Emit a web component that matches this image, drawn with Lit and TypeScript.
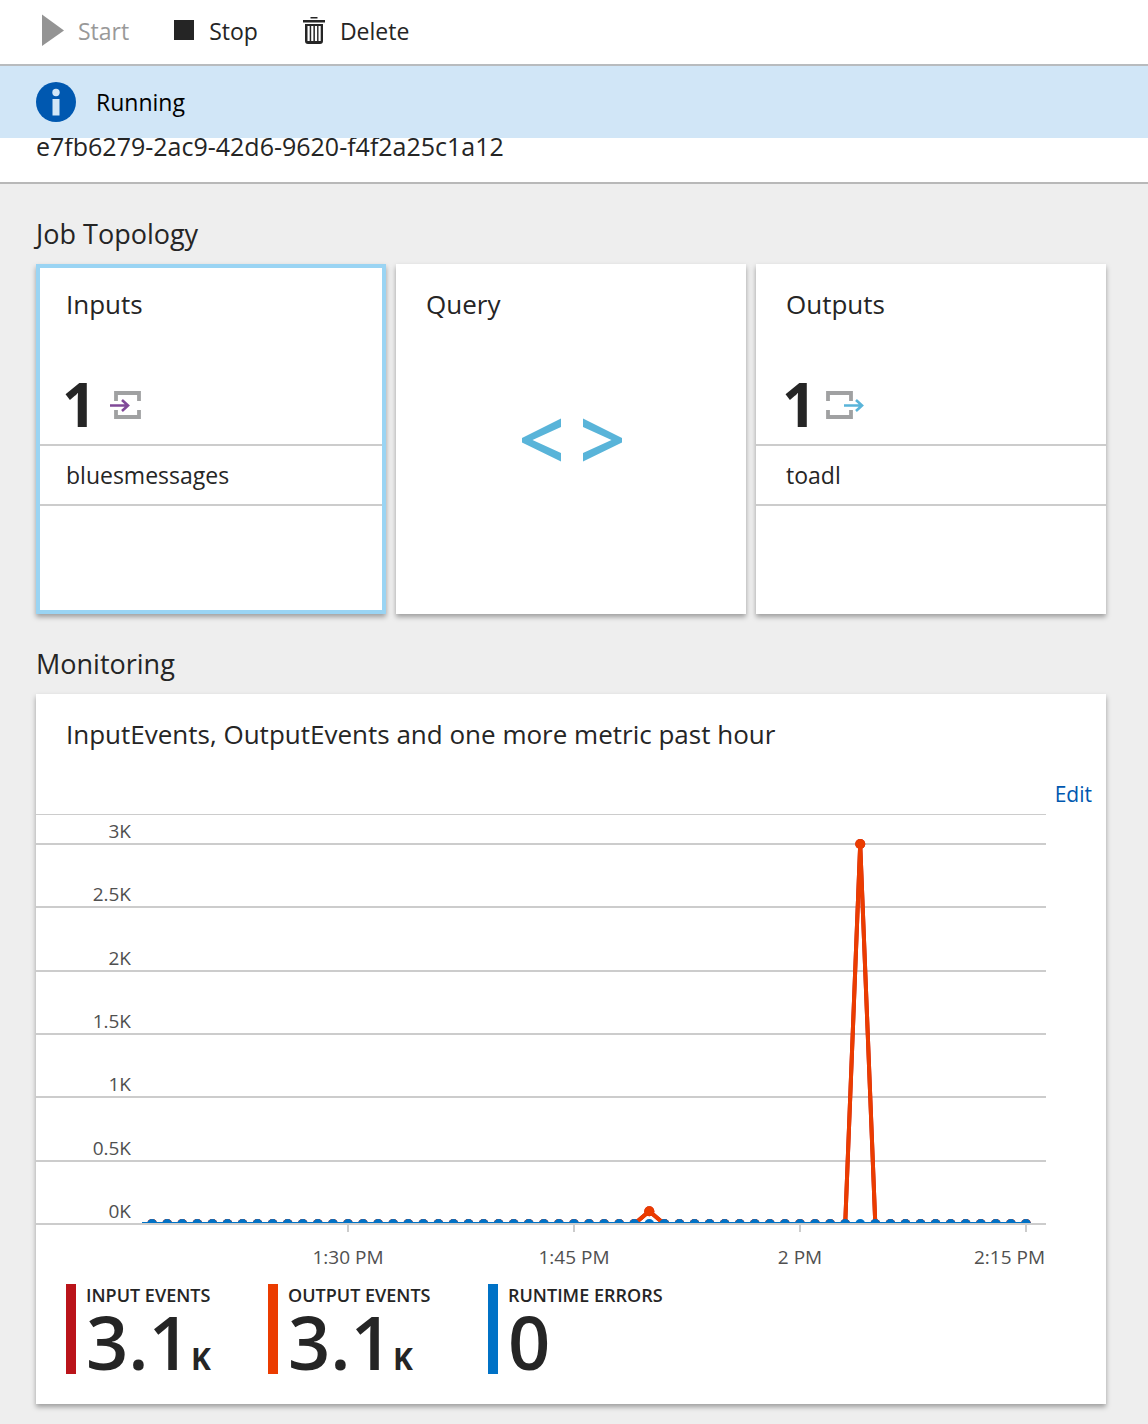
import { LitElement, html, svg, css } from "lit";
import { customElement, property } from "lit/decorators.js";

type TileKind = "inputs" | "query" | "outputs";

/** One step of the job: its inputs, its query or its outputs. */
@customElement("topology-tile")
class TopologyTile extends LitElement {
  @property() kind: TileKind = "query";
  @property() heading = "";
  @property() count = "";
  @property() item = "";
  @property({ type: Boolean, reflect: true }) selected = false;

  static styles = css`
    :host {
      display: flex;
      flex-direction: column;
      min-height: 350px;
      background: #fff;
      box-shadow: 0 3px 5px rgba(0, 0, 0, 0.34);
    }
    :host([selected]) {
      outline: 4px solid #9ad4f3;
      outline-offset: -4px;
    }
    .heading {
      margin: 0;
      padding: 20px 30px 0;
      font-size: 26px;
      line-height: 40px;
      font-weight: 400;
    }
    .summary {
      display: flex;
      align-items: center;
      height: 80px;
      margin-top: 40px;
      padding: 0 26px;
      border-bottom: 2px solid #ccc;
    }
    .count {
      font-size: 60px;
      line-height: 80px;
      font-weight: 700;
    }
    .item {
      padding: 0 30px;
      border-bottom: 2px solid #ccc;
      font-size: 23px;
      line-height: 58px;
    }
    .glyph {
      display: block;
      margin-left: 9px;
    }
    .code {
      display: flex;
      justify-content: center;
      padding-top: 94px;
    }
  `;

  private glyph() {
    const arrow =
      this.kind === "inputs"
        ? svg`<path d="M5 18.5H23M17 13l6 5.5-6 5.5" fill="none" stroke="#804998" stroke-width="2.6"/>`
        : svg`<path d="M19 18.5H37M31 13l6 5.5-6 5.5" fill="none" stroke="#59b4d9" stroke-width="2.6"/>`;
    const x = this.kind === "inputs" ? 9 : 1;
    return html`<svg class="glyph" width="42" height="34" viewBox="0 0 42 34" aria-hidden="true">
      <path
        transform="translate(${x} 4)"
        d="M2 10V2H25V10M2 19V26H25V19"
        fill="none"
        stroke="#a0a1a2"
        stroke-width="3.8"
      />
      ${arrow}
    </svg>`;
  }

  render() {
    return html`
      <h3 class="heading">${this.heading}</h3>
      ${this.kind === "query"
        ? html`<div class="code">
            <svg width="102" height="44" viewBox="0 0 102 44" aria-hidden="true">
              <path
                d="M2 20L41 0.500V9L12.500 22 41 35V43.500L2 24.500ZM102 20L63 0.500V9L91.500 22 63 35V43.500L102 24.500Z"
                fill="#59b4d9"
              />
            </svg>
          </div>`
        : html`<div class="summary"><span class="count">${this.count}</span>${this.glyph()}</div>
            <div class="item">${this.item}</div>`}
    `;
  }
}

/** Minute-by-minute line chart of the job's events. */
@customElement("metric-chart")
class MetricChart extends LitElement {
  static styles = css`
    :host {
      display: block;
    }
    .plot {
      display: block;
      width: 100%;
      height: auto;
    }
    .axis {
      font-size: 19px;
      fill: #505050;
    }
  `;

  private readonly levels = ["3K", "2.5K", "2K", "1.5K", "1K", "0.5K", "0K"];
  private readonly peaks: Record<number, number> = { 33: 100, 47: 3000 };

  private px(minute: number) {
    return 116.1 + (minute * 226) / 15;
  }

  private py(value: number) {
    return 410 - (value * 380) / 3000;
  }

  private series(color: string, flat: boolean) {
    const minutes = Array.from({ length: 60 }, (_, i) => i - 1);
    const at = (m: number) => this.py(flat ? 0 : this.peaks[m] ?? 0);
    const line = minutes.map((m) => `${this.px(m).toFixed(1)},${at(m).toFixed(1)}`).join(" ");
    return svg`<g clip-path="url(#area)">
      <polyline points=${line} fill="none" stroke=${color} stroke-width="4" stroke-linejoin="round"/>
      ${minutes.map((m) => svg`<circle cx=${this.px(m)} cy=${at(m)} r="5" fill=${color}/>`)}
    </g>`;
  }

  render() {
    const ticks = [
      { x: 312, label: "1:30 PM", anchor: "middle", tx: 312 },
      { x: 538, label: "1:45 PM", anchor: "middle", tx: 538 },
      { x: 764, label: "2 PM", anchor: "middle", tx: 764 },
      { x: 990, label: "2:15 PM", anchor: "end", tx: 1009 },
    ];
    return html`<svg class="plot" viewBox="0 0 1010 460" role="img" aria-label="Events in the past hour">
      <defs>
        <clipPath id="area"><rect x="106" y="0" width="904" height="409" /></clipPath>
      </defs>
      <rect width="1010" height="1" fill="#ccc" />
      ${this.levels.map((label, i) => {
        const y = 29 + Math.round((i * 380) / 6);
        return svg`<rect y=${y} width="1010" height="2" fill="#ccc"/>
          <text class="axis" x="95" y=${y - 5} text-anchor="end">${label}</text>`;
      })}
      ${ticks.map(
        (t) => svg`<rect x=${t.x - 1} y="411" width="2" height="7" fill="#ccc"/>
          <text class="axis" x=${t.tx} y="450" text-anchor=${t.anchor}>${t.label}</text>`
      )}
      ${this.series("#ba141a", false)} ${this.series("#eb3c00", false)} ${this.series("#0072c6", true)}
    </svg>`;
  }
}

@customElement("app-root")
class AppRoot extends LitElement {
  static styles = css`
    :host {
      display: block;
      box-sizing: border-box;
      min-height: 100vh;
      padding-bottom: 20px;
      background: #eee;
      color: #252525;
      font-family: "Open Sans", "Noto Sans", sans-serif;
      font-size: 23px;
    }
    .toolbar {
      display: flex;
      gap: 44px;
      height: 62px;
      padding: 0 40px 2px;
      background: #fff;
      border-bottom: 2px solid #b8bbbe;
    }
    .command {
      display: flex;
      align-items: center;
      gap: 14px;
      padding: 0;
      border: 0;
      background: none;
      color: inherit;
      font: inherit;
    }
    .command:disabled {
      color: #999;
    }
    .status {
      display: flex;
      align-items: center;
      gap: 20px;
      height: 72px;
      padding: 0 36px;
      background: #d1e6f7;
      color: #000;
    }
    .job-id {
      height: 44px;
      overflow: hidden;
      padding: 0 36px;
      background: #fff;
      border-bottom: 2px solid #b8b8b8;
    }
    .job-id-text {
      margin: -10px 0 0;
      font-size: 25px;
      line-height: 36px;
    }
    .content {
      padding: 20px 42px 0 36px;
    }
    .section-title {
      margin: 0;
      font-size: 27px;
      line-height: 60px;
      font-weight: 400;
    }
    .topology {
      display: grid;
      grid-template-columns: repeat(3, 1fr);
      gap: 10px;
      margin-bottom: 20px;
    }
    .panel {
      background: #fff;
      box-shadow: 0 3px 5px rgba(0, 0, 0, 0.34);
      padding-bottom: 30px;
    }
    .panel-title {
      margin: 0;
      padding: 20px 30px 0;
      font-size: 26px;
      line-height: 40px;
      font-weight: 400;
    }
    .panel-actions {
      display: flex;
      justify-content: flex-end;
      padding: 20px 14px 0;
      line-height: 40px;
    }
    .edit {
      color: #0058b0;
      font-size: 21px;
      text-decoration: none;
    }
    .chart {
      display: block;
      margin-right: 60px;
    }
    .totals {
      display: grid;
      grid-template-columns: 202px 220px auto;
      margin: 0;
      padding: 10px 30px 0;
    }
    .total {
      height: 90px;
      padding-left: 10px;
      border-left: 10px solid #ba141a;
    }
    .total.output {
      border-color: #eb3c00;
    }
    .total.errors {
      border-color: #0072c6;
    }
    .total-name {
      font-size: 18px;
      line-height: 22px;
      font-weight: 600;
      white-space: nowrap;
    }
    .total-value {
      margin: 0;
      font-size: 74px;
      line-height: 72px;
      font-weight: 600;
    }
    .unit {
      font-size: 30px;
      font-weight: 700;
    }
  `;

  private readonly totals = [
    { kind: "input", name: "INPUT EVENTS", value: "3.1", unit: "K" },
    { kind: "output", name: "OUTPUT EVENTS", value: "3.1", unit: "K" },
    { kind: "errors", name: "RUNTIME ERRORS", value: "0", unit: "" },
  ];

  render() {
    return html`
      <nav class="toolbar" aria-label="Job commands">
        <button class="command" disabled>
          <svg width="24" height="34" viewBox="0 0 24 34" aria-hidden="true">
            <path d="M2 0.500L24 16.500 2 32Z" fill="#949494" />
          </svg>
          Start
        </button>
        <button class="command">
          <svg width="22" height="22" viewBox="0 0 22 22" aria-hidden="true">
            <path d="M1 0H21V20H1Z" fill="#252525" />
          </svg>
          Stop
        </button>
        <button class="command">
          <svg width="24" height="28" viewBox="0 0 24 28" aria-hidden="true">
            <path d="M8.500 0H15.500V1.500H8.500ZM1 3H23V5.500H1Z" fill="#252525" />
            <path
              fill-rule="evenodd"
              d="M3 7H21V24Q21 27 18 27H6Q3 27 3 24ZM5.500 9V24H7.700V9ZM9.200 9V24H11.400V9ZM12.900 9V24H15.100V9ZM16.500 9V24H18.700V9Z"
              fill="#252525"
            />
          </svg>
          Delete
        </button>
      </nav>
      <div class="status" role="status">
        <svg width="40" height="40" viewBox="0 0 40 40" aria-hidden="true">
          <circle cx="20" cy="20" r="20" fill="#0058b0" />
          <circle cx="20" cy="10.500" r="3.700" fill="#d1e6f7" />
          <path d="M16.500 17H23.500V33.500H16.500Z" fill="#d1e6f7" />
        </svg>
        Running
      </div>
      <div class="job-id">
        <p class="job-id-text">e7fb6279-2ac9-42d6-9620-f4f2a25c1a12</p>
      </div>
      <main class="content">
        <h2 class="section-title">Job Topology</h2>
        <div class="topology">
          <topology-tile kind="inputs" heading="Inputs" count="1" item="bluesmessages" selected></topology-tile>
          <topology-tile kind="query" heading="Query"></topology-tile>
          <topology-tile kind="outputs" heading="Outputs" count="1" item="toadl"></topology-tile>
        </div>
        <h2 class="section-title">Monitoring</h2>
        <section class="panel">
          <h3 class="panel-title">InputEvents, OutputEvents and one more metric past hour</h3>
          <div class="panel-actions"><a class="edit" href="#edit">Edit</a></div>
          <metric-chart class="chart"></metric-chart>
          <div class="totals">
            ${this.totals.map(
              (t) => html`<div class="total ${t.kind}">
                <div class="total-name">${t.name}</div>
                <p class="total-value">${t.value}${t.unit ? html`<span class="unit">${t.unit}</span>` : ""}</p>
              </div>`
            )}
          </div>
        </section>
      </main>
    `;
  }
}
